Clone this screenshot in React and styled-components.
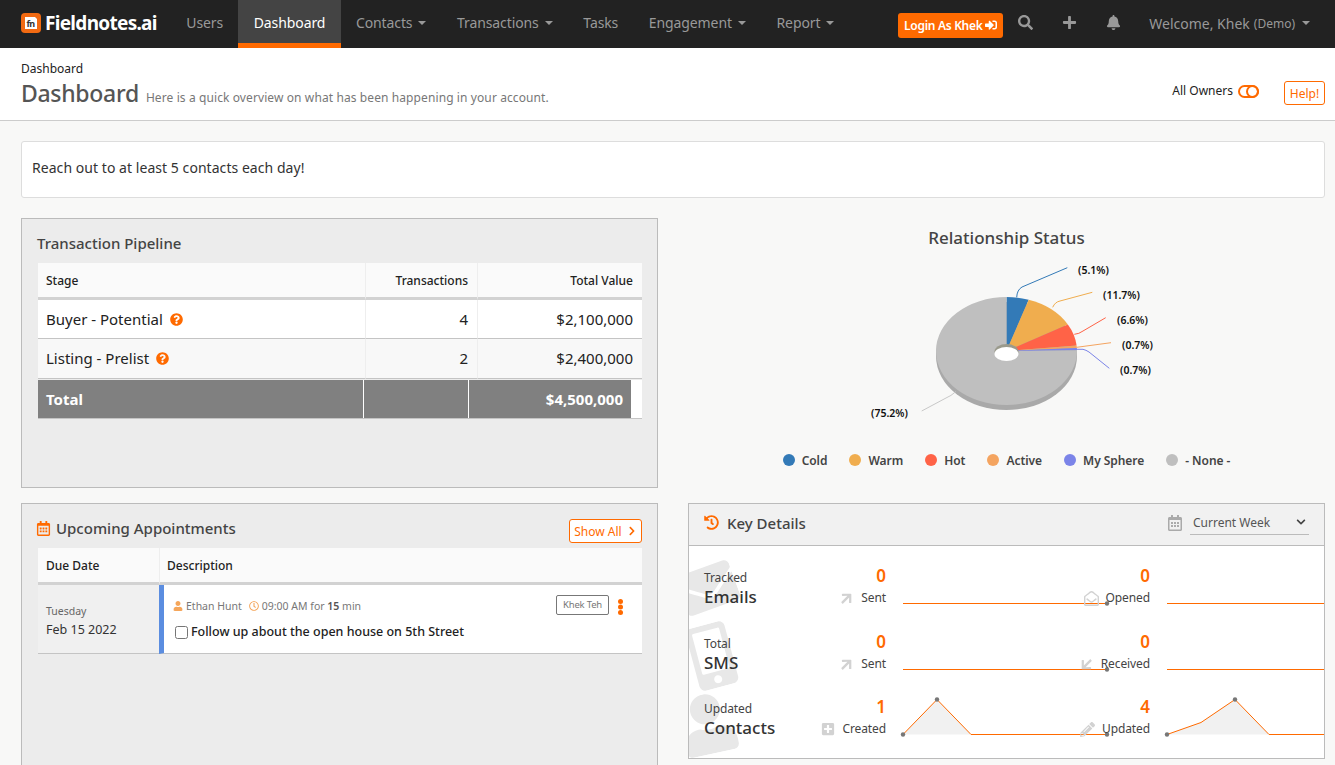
import React from "react";
import styled, { createGlobalStyle } from "styled-components";
import {
  FaSearch,
  FaPlus,
  FaBell,
  FaSignInAlt,
  FaQuestionCircle,
  FaRegCalendarAlt,
  FaHistory,
  FaChevronRight,
  FaChevronDown,
  FaUser,
  FaRegClock,
  FaEnvelope,
  FaRegEnvelopeOpen,
  FaMobileAlt,
  FaPencilAlt,
  FaPlusSquare,
  FaArrowRight,
} from "react-icons/fa";

const ORANGE = "#ff6a00";

const GlobalStyle = createGlobalStyle`
  html, body {
    margin: 0;
    height: 100%;
    overflow: hidden;
  }
  body {
    background: #f8f8f7;
    font-family: "Noto Sans", "Open Sans", "Liberation Sans", sans-serif;
    color: #222;
  }
  * { box-sizing: border-box; }
`;

const Navbar = styled.div`
  display: flex;
  align-items: stretch;
  height: 48px;
  background: #222;
  padding-left: 21px;
`;

const Brand = styled.div`
  display: flex;
  align-items: center;
  gap: 4px;
  width: 150px;
  padding-bottom: 2px;
  color: #fff;
  font-size: 19px;
  font-weight: 700;
  letter-spacing: -0.7px;
`;

const NavItem = styled.div`
  display: flex;
  align-items: center;
  gap: 6px;
  padding: 2px 15.3px 0;
  font-size: 14px;
  letter-spacing: -0.1px;
  color: ${(p) => (p.$active ? "#fff" : "#999")};
  background: ${(p) => (p.$active ? "#444" : "transparent")};
  border-bottom: 5px solid ${(p) => (p.$active ? ORANGE : "transparent")};
`;

const Caret = styled.span`
  display: inline-block;
  border-top: 4px solid currentColor;
  border-left: 4px solid transparent;
  border-right: 4px solid transparent;
  margin-left: ${(p) => p.$gap || 0}px;
`;

const NavRight = styled.div`
  margin-left: auto;
  display: flex;
  align-items: center;
  padding-right: 25px;
  color: #999;
`;

const LoginButton = styled.div`
  display: flex;
  align-items: center;
  justify-content: center;
  gap: 3px;
  width: 105px;
  height: 25px;
  margin-top: 2px;
  background: ${ORANGE};
  border-radius: 3px;
  color: #fff;
  font-size: 12px;
  font-weight: 600;
  letter-spacing: -0.3px;
`;

const NavIcon = styled.span`
  display: flex;
  justify-content: center;
  width: 44px;
  margin-bottom: 3px;
  font-size: 15px;
  color: #999;
`;

const Welcome = styled.div`
  display: flex;
  align-items: center;
  margin-left: 14px;
  margin-bottom: 2px;
  font-size: 14px;
  small {
    font-size: 12px;
    margin-left: 4px;
  }
`;

const PageHeader = styled.div`
  display: flex;
  justify-content: space-between;
  align-items: flex-end;
  height: 73px;
  padding: 0 10px 6px 21px;
  background: #fff;
  border-bottom: 1px solid #ccc;
`;

const Breadcrumb = styled.div`
  font-size: 12px;
  line-height: 16px;
  color: #222;
`;

const TitleRow = styled.div`
  display: flex;
  align-items: baseline;
  gap: 7px;
  line-height: 32px;
`;

const PageTitle = styled.div`
  font-size: 23px;
  font-weight: 500;
  color: #555;
  letter-spacing: -0.3px;
`;

const PageSub = styled.div`
  font-size: 12px;
  color: #777;
  letter-spacing: 0.1px;
`;

const HeaderTools = styled.div`
  display: flex;
  align-items: center;
  margin-bottom: 9px;
`;

const OwnerLabel = styled.div`
  font-size: 12px;
  margin: 0 5px 6px 0;
`;

const ToggleIcon = styled.svg`
  display: block;
  margin: 0 25px 4px 0;
`;

const OutlineButton = styled.div`
  display: flex;
  align-items: center;
  justify-content: center;
  gap: 5px;
  width: ${(p) => p.$width}px;
  height: 24px;
  margin-top: ${(p) => p.$top || 0}px;
  border: 1px solid ${ORANGE};
  border-radius: 3px;
  background: #fff;
  color: ${ORANGE};
  font-size: 12px;
`;

const Content = styled.div`
  padding: 20px 10px 0 21px;
`;

const Notice = styled.div`
  display: flex;
  align-items: center;
  height: 57px;
  padding: 0 0 5px 10px;
  background: #fff;
  border: 1px solid #ddd;
  border-radius: 3px;
  font-size: 14px;
  letter-spacing: 0.05px;
  color: #333;
`;

const Grid = styled.div`
  display: grid;
  grid-template-columns: 637px 637px;
  grid-template-rows: 270px 290px;
  column-gap: 30px;
  row-gap: 15px;
  margin-top: 20px;
`;

const Panel = styled.div`
  padding: 0 15px 0 16px;
  background: #ececec;
  border: 1px solid #bbb;
`;

const PanelTitle = styled.div`
  display: flex;
  align-items: center;
  gap: 5px;
  height: 44px;
  padding-top: 4px;
  margin-left: -1px;
  font-size: 15px;
  font-weight: 500;
  color: #444;
  svg {
    color: ${ORANGE};
    font-size: 15px;
  }
`;

const Table = styled.table`
  width: 604px;
  border-collapse: separate;
  border-spacing: 0;
  table-layout: fixed;
  font-size: 12px;
`;

const Head = styled.th`
  height: 37px;
  padding: 0 ${(p) => (p.$right ? 9 : 8)}px 0 ${(p) => (p.$first ? 8 : 7)}px;
  background: #fafafa;
  border-bottom: 3px solid #d2d2d2;
  border-left: ${(p) => (p.$first ? "none" : "1px solid #eee")};
  text-align: ${(p) => (p.$right ? "right" : "left")};
  font-weight: 500;
  color: #222;
`;

const Cell = styled.td`
  height: ${(p) => (p.$alt ? 40 : 39)}px;
  padding: 0 ${(p) => (p.$right ? 9 : 8)}px ${(p) => (p.$alt ? 2 : 0)}px 8px;
  background: ${(p) => (p.$alt ? "#f8f8f8" : "#fff")};
  border-bottom: 1px solid #c4c4c4;
  border-left: ${(p) => (p.$first ? "none" : "1px solid #eee")};
  text-align: ${(p) => (p.$right ? "right" : "left")};
  font-size: 15px;
  color: #222;
  svg {
    color: ${ORANGE};
    font-size: 13px;
    margin-left: 7px;
    vertical-align: -1px;
  }
`;

const TotalRow = styled.div`
  display: flex;
  width: 604px;
  height: 39px;
  margin-top: 1px;
  background: #fff;
  border-bottom: 1px solid #c4c4c4;
`;

const TotalCell = styled.div`
  display: flex;
  align-items: center;
  justify-content: ${(p) => (p.$right ? "flex-end" : "flex-start")};
  width: ${(p) => p.$width}px;
  margin-right: 1px;
  padding: 0 8px;
  background: #808080;
  color: #fff;
  font-size: 15px;
  font-weight: 700;
`;

const ChartCell = styled.div`
  display: flex;
  flex-direction: column;
  align-items: center;
`;

const ChartTitle = styled.div`
  height: 40px;
  line-height: 40px;
  font-size: 17px;
  font-weight: 500;
  color: #444;
`;

const ChartLabel = styled.text`
  font-size: 10.5px;
  font-weight: 600;
  fill: #111;
  font-family: "Noto Sans", sans-serif;
`;

const Legend = styled.div`
  display: flex;
  align-items: center;
  gap: 22px;
  height: 18px;
  margin-top: 23px;
`;

const LegendItem = styled.div`
  display: flex;
  align-items: center;
  gap: 7px;
  font-size: 12px;
  font-weight: 600;
  color: #444;
  letter-spacing: -0.05px;
  &::before {
    content: "";
    width: 12px;
    height: 12px;
    border-radius: 50%;
    background: ${(p) => p.$color};
  }
`;

const PanelHead = styled.div`
  display: flex;
  justify-content: space-between;
  align-items: center;
  height: 44px;
  ${PanelTitle} {
    margin-left: -2px;
  }
`;

const DateCell = styled.td`
  height: 69px;
  padding: 4px 8px 0;
  background: #f0f0f0;
  border-bottom: 1px solid #c4c4c4;
  font-size: 12.5px;
  color: #333;
  small {
    display: block;
    font-size: 10.5px;
    color: #666;
    margin-bottom: 3px;
  }
`;

const TaskCell = styled.td`
  position: relative;
  padding: 0 0 0 10px;
  background: #fff;
  border-left: 5px solid #5b8de0;
  border-bottom: 1px solid #c4c4c4;
`;

const TaskMeta = styled.div`
  display: flex;
  align-items: center;
  gap: 3px;
  margin-left: -1px;
  font-size: 10.5px;
  color: #777;
  svg {
    color: #f5a65b;
    font-size: 10px;
  }
  b {
    font-weight: 600;
    color: #555;
  }
`;

const MetaPart = styled.span`
  margin-right: 4px;
`;

const TaskText = styled.label`
  display: flex;
  align-items: center;
  gap: 3px;
  margin-top: 10px;
  font-size: 12.5px;
  font-weight: 500;
  color: #222;
  input {
    width: 13px;
    height: 13px;
    margin: 2px 0 0 1px;
  }
`;

const OwnerTag = styled.span`
  position: absolute;
  top: 10px;
  right: 33px;
  padding: 1px 6px;
  height: 20px;
  line-height: 16px;
  background: #fff;
  border: 1px solid #777;
  border-radius: 2px;
  font-size: 9.5px;
  color: #777;
  letter-spacing: -0.2px;
`;

const Dots = styled.span`
  position: absolute;
  top: 14px;
  right: 19px;
  width: 5px;
  height: 5px;
  border-radius: 50%;
  background: ${ORANGE};
  box-shadow: 0 5.5px 0 ${ORANGE}, 0 11px 0 ${ORANGE};
`;

const KeyPanel = styled.div`
  display: flex;
  flex-direction: column;
  height: 256px;
  background: #fff;
  border: 1px solid #bbb;
`;

const KeyHead = styled.div`
  display: flex;
  align-items: center;
  justify-content: space-between;
  height: 42px;
  padding: 0 15px 4px;
  background: #f1f1f1;
  border-bottom: 1px solid #bbb;
`;

const KeyTitle = styled.div`
  display: flex;
  align-items: center;
  gap: 8px;
  font-size: 15px;
  font-weight: 500;
  color: #444;
  svg {
    color: ${ORANGE};
    font-size: 15px;
  }
`;

const RangeBox = styled.div`
  display: flex;
  align-items: center;
  gap: 7px;
  svg {
    color: #aaa;
  }
`;

const RangeSelect = styled.div`
  display: flex;
  justify-content: space-between;
  align-items: center;
  width: 119px;
  height: 24px;
  padding: 0 3px;
  border-bottom: 1px solid #bbb;
  font-size: 12px;
  color: #555;
  svg {
    color: #444;
    font-size: 10px;
  }
`;

const KeyBody = styled.div`
  position: relative;
  flex: 1;
  overflow: hidden;
  padding-top: 19px;
`;

const Watermark = styled.span`
  position: absolute;
  left: ${(p) => p.$left}px;
  top: ${(p) => p.$top}px;
  font-size: ${(p) => p.$size}px;
  color: #e8e8e8;
  transform: rotate(${(p) => p.$rotate}deg);
  svg {
    display: block;
  }
`;

const KeyRow = styled.div`
  position: relative;
  display: grid;
  grid-template-columns: 100px 82px 197px 67px 157px;
  height: ${(p) => p.$height}px;
  padding-left: 15px;
`;

const Metric = styled.div`
  padding-top: 5px;
`;

const MetricSmall = styled.div`
  font-size: 12px;
  line-height: 16px;
  color: #444;
  letter-spacing: -0.1px;
`;

const MetricBig = styled.div`
  font-size: 17px;
  line-height: 22px;
  font-weight: 500;
  color: #333;
`;

const Stat = styled.div`
  display: flex;
  flex-direction: column;
  align-items: flex-end;
`;

const StatNumber = styled.div`
  font-size: 17px;
  line-height: 22px;
  font-weight: 600;
  color: ${ORANGE};
`;

const StatLabel = styled.div`
  display: flex;
  align-items: center;
  gap: 7px;
  margin-top: 1px;
  font-size: 12px;
  line-height: 20px;
  white-space: nowrap;
  color: #444;
  letter-spacing: -0.1px;
  svg {
    color: #d2d2d2;
    font-size: 15px;
  }
`;

const SparkCell = styled.div`
  padding-left: 17px;
`;

const SparkSvg = styled.svg`
  display: block;
  overflow: visible;
`;

const Logo = () => (
  <svg width="20" height="20" viewBox="0 0 20 20">
    <rect width="20" height="20" rx="4" fill="#f26a12" />
    <path d="M4 4h10l2 2v10H4z" fill="#fff" />
    <text x="5.5" y="14" fontSize="9" fontWeight="700" fill="#333" fontFamily="Noto Sans, sans-serif">
      fn
    </text>
  </svg>
);

const polar = (cx, cy, rx, ry, pct) => {
  const a = (pct / 100) * 2 * Math.PI;
  return [cx + rx * Math.sin(a), cy - ry * Math.cos(a)];
};

const slices = [
  { from: 0, to: 5.1, color: "#337ab7" },
  { from: 5.1, to: 16.8, color: "#f0ad4e" },
  { from: 16.8, to: 23.4, color: "#ff6347" },
  { from: 23.4, to: 24.1, color: "#f4a460" },
  { from: 24.1, to: 24.8, color: "#7b84e8" },
  { from: 24.8, to: 100, color: "#bfbfbf" },
];

const leaders = [
  { d: "M1016.7 297.3 Q1017 290 1022 287 L1067.3 267.7", color: "#337ab7" },
  { d: "M1052.7 307.3 Q1055 302 1060 301 L1092.3 292.3", color: "#f0ad4e" },
  { d: "M1074.3 334.3 Q1079 334 1083 331 L1105.7 317.7", color: "#ff6347" },
  { d: "M1076.7 347.3 L1111 342.7", color: "#f4a460" },
  { d: "M1076.7 349.3 L1083 349.3 Q1086 350 1089 352 L1109.3 368.3", color: "#7b84e8" },
  { d: "M955.7 391.7 Q951 396 946 398 L921.7 411", color: "#c8c8c8" },
];

const pieLabels = [
  { x: 1078, y: 274, t: "(5.1%)" },
  { x: 1103, y: 299, t: "(11.7%)" },
  { x: 1117, y: 324, t: "(6.6%)" },
  { x: 1122, y: 349, t: "(0.7%)" },
  { x: 1120, y: 374, t: "(0.7%)" },
  { x: 871, y: 417, t: "(75.2%)" },
];

const PieChart = () => {
  const cx = 1006.5;
  const cy = 351;
  const rx = 70.5;
  const ry = 54;
  return (
    <svg width="637" height="170" viewBox="688 258 637 170">
      <ellipse cx={cx} cy={cy + 5} rx={rx} ry={ry} fill="#a9a9a9" />
      {slices.map((s) => {
        const [x1, y1] = polar(cx, cy, rx, ry, s.from);
        const [x2, y2] = polar(cx, cy, rx, ry, s.to);
        const large = s.to - s.from > 50 ? 1 : 0;
        return (
          <path
            key={s.from}
            d={`M${cx} ${cy}L${x1} ${y1}A${rx} ${ry} 0 ${large} 1 ${x2} ${y2}Z`}
            fill={s.color}
          />
        );
      })}
      <ellipse cx={cx} cy={cy + 0.5} rx="12" ry="7.5" fill="#9a9a8c" />
      <ellipse cx={cx} cy={cy + 3} rx="12" ry="7" fill="#fff" />
      {leaders.map((l) => (
        <path key={l.d} d={l.d} fill="none" stroke={l.color} strokeWidth="1" />
      ))}
      {pieLabels.map((l) => (
        <ChartLabel key={l.y} x={l.x} y={l.y}>
          {l.t}
        </ChartLabel>
      ))}
    </svg>
  );
};

// values are px above the baseline, one point every 34px
const Spark = ({ points, dots, width = 207 }) => {
  const step = 34;
  const base = 38.5;
  const coords = points.map((v, i) => [i * step, base - v]);
  const line = coords.map((c) => c.join(",")).join(" ");
  const area = `0,${base} ${line} ${(points.length - 1) * step},${base}`;
  return (
    <SparkSvg width={width} height="40">
      <polygon points={area} fill="#f1f1f1" />
      <polyline points={line} fill="none" stroke={ORANGE} strokeWidth="1" />
      {dots.map((i) => (
        <circle key={i} cx={coords[i][0]} cy={coords[i][1]} r="2.2" fill="#777" />
      ))}
    </SparkSvg>
  );
};

const flat = [0, 0, 0, 0, 0, 0, 0];

const keyRows = [
  {
    small: "Tracked",
    big: "Emails",
    height: 66,
    left: { n: 0, label: "Sent", icon: <FaArrowRight style={{ transform: "rotate(-45deg)" }} />, points: flat, dots: [6] },
    right: { n: 0, label: "Opened", icon: <FaRegEnvelopeOpen />, points: flat, dots: [] },
  },
  {
    small: "Total",
    big: "SMS",
    height: 65,
    left: { n: 0, label: "Sent", icon: <FaArrowRight style={{ transform: "rotate(-45deg)" }} />, points: flat, dots: [6] },
    right: { n: 0, label: "Received", icon: <FaArrowRight style={{ transform: "rotate(135deg)" }} />, points: flat, dots: [] },
  },
  {
    small: "Updated",
    big: "Contacts",
    height: 65,
    left: { n: 1, label: "Created", icon: <FaPlusSquare style={{ fontSize: 14 }} />, points: [0, 35, 0, 0, 0, 0, 0], dots: [0, 1, 6] },
    right: { n: 4, label: "Updated", icon: <FaPencilAlt />, points: [0, 12, 35, 0, 0, 0, 0], dots: [0, 2] },
  },
];

const legend = [
  ["Cold", "#337ab7"],
  ["Warm", "#f0ad4e"],
  ["Hot", "#ff6347"],
  ["Active", "#f4a460"],
  ["My Sphere", "#7b84e8"],
  ["- None -", "#bfbfbf"],
];

export default function App() {
  return (
    <>
      <GlobalStyle />
      <Navbar>
        <Brand>
          <Logo />
          Fieldnotes.ai
        </Brand>
        <NavItem>Users</NavItem>
        <NavItem $active>Dashboard</NavItem>
        <NavItem>Contacts <Caret /></NavItem>
        <NavItem>Transactions <Caret /></NavItem>
        <NavItem>Tasks</NavItem>
        <NavItem>Engagement <Caret /></NavItem>
        <NavItem>Report <Caret /></NavItem>
        <NavRight>
          <LoginButton>Login As Khek <FaSignInAlt /></LoginButton>
          <NavIcon><FaSearch /></NavIcon>
          <NavIcon><FaPlus /></NavIcon>
          <NavIcon><FaBell /></NavIcon>
          <Welcome>Welcome, Khek <small>(Demo)</small><Caret $gap={7} /></Welcome>
        </NavRight>
      </Navbar>

      <PageHeader>
        <div>
          <Breadcrumb>Dashboard</Breadcrumb>
          <TitleRow>
            <PageTitle>Dashboard</PageTitle>
            <PageSub>Here is a quick overview on what has been happening in your account.</PageSub>
          </TitleRow>
        </div>
        <HeaderTools>
          <OwnerLabel>All Owners</OwnerLabel>
          <ToggleIcon width="21" height="13" viewBox="0 0 21 13" fill="none" stroke={ORANGE} strokeWidth="2">
            <rect x="1" y="1" width="19" height="11" rx="5.5" />
            <circle cx="14.5" cy="6.5" r="5.5" />
          </ToggleIcon>
          <OutlineButton $width={41}>Help!</OutlineButton>
        </HeaderTools>
      </PageHeader>

      <Content>
        <Notice>Reach out to at least 5 contacts each day!</Notice>
        <Grid>
          <Panel>
            <PanelTitle>Transaction Pipeline</PanelTitle>
            <Table>
              <colgroup>
                <col width="327" />
                <col width="112" />
                <col width="165" />
              </colgroup>
              <thead>
                <tr>
                  <Head $first>Stage</Head>
                  <Head $right>Transactions</Head>
                  <Head $right>Total Value</Head>
                </tr>
              </thead>
              <tbody>
                <tr>
                  <Cell $first>Buyer - Potential<FaQuestionCircle /></Cell>
                  <Cell $right>4</Cell>
                  <Cell $right>$2,100,000</Cell>
                </tr>
                <tr>
                  <Cell $first $alt>Listing - Prelist<FaQuestionCircle /></Cell>
                  <Cell $right $alt>2</Cell>
                  <Cell $right $alt>$2,400,000</Cell>
                </tr>
              </tbody>
            </Table>
            <TotalRow>
              <TotalCell $width={325}>Total</TotalCell>
              <TotalCell $width={104} />
              <TotalCell $width={162} $right>$4,500,000</TotalCell>
            </TotalRow>
          </Panel>

          <ChartCell>
            <ChartTitle>Relationship Status</ChartTitle>
            <PieChart />
            <Legend>
              {legend.map(([name, color]) => (
                <LegendItem key={name} $color={color}>{name}</LegendItem>
              ))}
            </Legend>
          </ChartCell>

          <Panel>
            <PanelHead>
              <PanelTitle>
                <FaRegCalendarAlt /> Upcoming Appointments
              </PanelTitle>
              <OutlineButton $width={73} $top={10}>Show All <FaChevronRight style={{ fontSize: 10 }} /></OutlineButton>
            </PanelHead>
            <Table>
              <colgroup>
                <col width="121" />
                <col width="483" />
              </colgroup>
              <thead>
                <tr>
                  <Head $first>Due Date</Head>
                  <Head>Description</Head>
                </tr>
              </thead>
              <tbody>
                <tr>
                  <DateCell>
                    <small>Tuesday</small>
                    Feb 15 2022
                  </DateCell>
                  <TaskCell>
                    <TaskMeta>
                      <FaUser />
                      <MetaPart>Ethan Hunt</MetaPart>
                      <FaRegClock />
                      <span>09:00 AM for <b>15</b> min</span>
                    </TaskMeta>
                    <TaskText>
                      <input type="checkbox" readOnly />
                      Follow up about the open house on 5th Street
                    </TaskText>
                    <OwnerTag>Khek Teh</OwnerTag>
                    <Dots />
                  </TaskCell>
                </tr>
              </tbody>
            </Table>
          </Panel>

          <KeyPanel>
            <KeyHead>
              <KeyTitle><FaHistory /> Key Details</KeyTitle>
              <RangeBox>
                <FaRegCalendarAlt />
                <RangeSelect>Current Week <FaChevronDown /></RangeSelect>
              </RangeBox>
            </KeyHead>
            <KeyBody>
              <Watermark $left={-9} $top={14} $size={56} $rotate={-20}><FaEnvelope /></Watermark>
              <Watermark $left={-9} $top={78} $size={64} $rotate={-15}><FaMobileAlt /></Watermark>
              <Watermark $left={-11} $top={148} $size={60} $rotate={-12}><FaUser /></Watermark>
              {keyRows.map((r) => (
                <KeyRow key={r.big} $height={r.height}>
                  <Metric>
                    <MetricSmall>{r.small}</MetricSmall>
                    <MetricBig>{r.big}</MetricBig>
                  </Metric>
                  <Stat>
                    <StatNumber>{r.left.n}</StatNumber>
                    <StatLabel>{r.left.icon}{r.left.label}</StatLabel>
                  </Stat>
                  <SparkCell>
                    <Spark points={r.left.points} dots={r.left.dots} />
                  </SparkCell>
                  <Stat>
                    <StatNumber>{r.right.n}</StatNumber>
                    <StatLabel>{r.right.icon}{r.right.label}</StatLabel>
                  </Stat>
                  <SparkCell>
                    <Spark points={r.right.points} dots={r.right.dots} />
                  </SparkCell>
                </KeyRow>
              ))}
            </KeyBody>
          </KeyPanel>
        </Grid>
      </Content>
    </>
  );
}
